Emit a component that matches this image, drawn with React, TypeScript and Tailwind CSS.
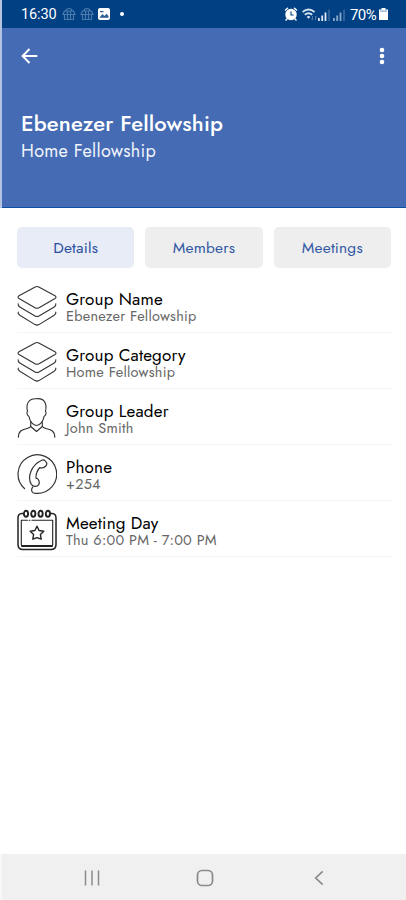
import type { ReactNode } from 'react';

const tabs = [
    { label: 'Details', active: true },
    { label: 'Members', active: false },
    { label: 'Meetings', active: false },
];

function LayersIcon() {
    return (
        <svg viewBox="0 0 40 42" className="h-[42px] w-10" fill="none" stroke="#333" strokeWidth="1.1" strokeLinejoin="round" strokeLinecap="round">
            <path d="M18.2 1.9Q20 1 21.8 1.9L38 10.8Q40 12.2 38 13.5L22 22.8Q20 23.8 18 22.8L2 13.5Q0 12.2 2 10.8Z" />
            <path d="M1.2 18.7Q.8 20.8 2.8 22L18 31Q20 32.1 22 31L37.2 22Q39.2 20.8 38.8 18.7" />
            <path d="M1.2 27Q.8 29.1 2.8 30.3L18 39.6Q20 40.7 22 39.6L37.2 30.3Q39.2 29.1 38.8 27" />
        </svg>
    );
}

function PersonIcon() {
    return (
        <svg viewBox="0 0 40 42" className="h-[42px] w-10" fill="none" stroke="#333" strokeWidth="1.1" strokeLinejoin="round" strokeLinecap="round">
            <path d="M10.6 14.5C8.5 6.5 12 1.5 19 1.8C27 .5 30.5 6.5 28.4 14.5C30 15 28.5 19 27.2 19.2C26 25.5 22.5 28.5 19.5 28.5S13 25.5 11.8 19.2C10.5 19 9 15 10.6 14.5Z" />
            <path d="M13.7 24.8V29.5L19.5 34.5L25.3 29.5V24.8" />
            <path d="M13.7 29.5C11.5 33.2 1.6 29.8 1.4 40.2M25.3 29.5C27.5 33.2 37.6 29.8 37.8 40.2" />
        </svg>
    );
}

function PhoneIcon() {
    return (
        <svg viewBox="0 0 40 42" className="h-[42px] w-10" fill="none" stroke="#333" strokeWidth="1.2" strokeLinejoin="round" strokeLinecap="round">
            <path d="M7.5 35.5A19.3 19.3 0 1 1 18.5 40.3C14.8 40.5 13.5 37 15.7 34.2" />
            <path d="M24.7 7.2C27.2 6 30.5 9.3 29.7 11.5C29.2 13.8 25.2 15.8 22.8 14.5C20 17.8 18.7 21.5 19 25.2C21.5 25.3 23.2 29.2 21.7 31.6C20 34.5 16 33.7 14.3 31.3C10 24.5 14 12 24.7 7.2Z" />
        </svg>
    );
}

function CalendarIcon() {
    return (
        <svg viewBox="0 0 40 42" className="h-[42px] w-10" fill="none" stroke="#222" strokeLinejoin="round" strokeLinecap="round">
            <path strokeWidth="1.5" d="M6 4.5H4.8Q1 4.8 1 9V35.5Q1 40.5 6 40.5H34Q39 40.5 39 35.5V9Q39 4.8 35.2 4.5H34" />
            <path strokeWidth="1.1" d="M10.5 11.2H4.3V35.8Q4.3 37 5.8 37H34.2Q35.7 37 35.7 35.8V11.2H15M12.2 11.2h.8" />
            <path strokeWidth="1.8" d="M5 37H35" />
            <g strokeWidth="1.9">
                <ellipse cx="9" cy="4.8" rx="2.1" ry="3" />
                <ellipse cx="16.3" cy="4.8" rx="2.1" ry="3" />
                <ellipse cx="23.6" cy="4.8" rx="2.1" ry="3" />
                <ellipse cx="30.9" cy="4.8" rx="2.1" ry="3" />
            </g>
            <path strokeWidth="1.4" d="M20 17.2L22.1 21.5L26.8 22.2L23.4 25.5L24.2 30.2L20 28.6L15.8 30.2L16.6 25.5L13.2 22.2L17.9 21.5Z" />
        </svg>
    );
}

const details: { title: string; value: string; icon: ReactNode }[] = [
    { title: 'Group Name', value: 'Ebenezer Fellowship', icon: <LayersIcon /> },
    { title: 'Group Category', value: 'Home Fellowship', icon: <LayersIcon /> },
    { title: 'Group Leader', value: 'John Smith', icon: <PersonIcon /> },
    { title: 'Phone', value: '+254', icon: <PhoneIcon /> },
    { title: 'Meeting Day', value: 'Thu 6:00 PM - 7:00 PM', icon: <CalendarIcon /> },
];

function GiftIcon() {
    return (
        <svg viewBox="0 0 14 14" className="h-3.5 w-3.5" fill="none" stroke="#4a7aac" strokeWidth="1.2">
            <path d="M2.5 4H11.5L13 7.5H1ZM2.5 7.5V12.5H11.5V7.5M5.5 4V12.5M8.5 4V12.5M4 4Q4 1.5 7 1.5T10 4" />
        </svg>
    );
}

function SignalIcon({ dim }: { dim?: boolean }) {
    return (
        <svg viewBox="0 0 13 12" className="h-3 w-[13px]" fill={dim ? '#8aa9ca' : '#dce8f5'}>
            <path d="M0 9h1.8v3H0zM3.3 6.5h1.8V12H3.3zM6.6 3.5h1.8V12H6.6z" />
            <path d="M10.3 .5h1.5V12h-1.5z" fill="#3f6d9e" />
        </svg>
    );
}

function StatusBar() {
    return (
        <div className="flex h-7 items-center bg-[#004083] pl-[19px] pr-[18px] font-['Roboto',sans-serif] text-white">
            <span className="mt-[2px] w-9 text-[14.5px] leading-none tracking-[-0.1px]">16:30</span>
            <div className="ml-[5px] flex items-center gap-[4px]">
                <GiftIcon />
                <GiftIcon />
                <svg viewBox="0 0 12 12" className="h-3 w-3">
                    <rect width="12" height="12" rx="2" fill="#fff" />
                    <path d="M1.5 9.5L4.5 6L6.5 8L8.5 5.8L10.5 8V9.8H1.5ZM2 3H5.5V4.2H2Z" fill="#315f93" />
                </svg>
            </div>
            <span className="ml-[10px] h-1 w-1 rounded-full bg-white" />
            <div className="ml-auto flex items-center">
                <svg viewBox="0 0 14 14" className="h-3.5 w-3.5" fill="none" stroke="#fff" strokeWidth="1.5" strokeLinecap="round">
                    <circle cx="7" cy="7.5" r="5" fill="#fff" />
                    <path d="M1.5 3L3.5 1.3M12.5 3L10.5 1.3M3.2 11.8L2 13M10.8 11.8L12 13" />
                    <path d="M7 4.8V8H9.2" stroke="#004083" strokeWidth="1.1" />
                </svg>
                <svg viewBox="0 0 16 13" className="ml-1 h-[13px] w-4" fill="none" stroke="#d5e2f0" strokeWidth="1.9">
                    <path d="M.6 4Q6.5-1 12.6 4M2.8 6.7Q6.5 3.7 10.2 6.7" />
                    <path d="M4.7 8.7Q6.5 7.4 8.3 8.7L6.5 10.8Z" fill="#e6eef7" stroke="none" />
                    <path d="M10.5 8V12M9 10.5L10.5 12M13.5 12V8M15 9.5L13.5 8" stroke="#4f7aa8" strokeWidth="1" />
                </svg>
                <span className="mt-[2px] flex gap-[2px]">
                    <SignalIcon />
                    <SignalIcon dim />
                </span>
                <span className="ml-[4px] mt-[2px] w-[29px] text-[15px] leading-none tracking-[-0.6px]">70%</span>
                <svg viewBox="0 0 9 12" className="h-3 w-[9px]">
                    <path d="M2.5 0h4v1.5H9V12H0V1.5H2.5Z" fill="#fff" />
                    <path d="M1 2.3H8V4H1Z" fill="#a6bfd8" />
                </svg>
            </div>
        </div>
    );
}

export default function App() {
    return (
        <div className="flex h-[900px] w-[406px] flex-col overflow-hidden bg-white font-['Jost','Lato',sans-serif]">
            <div className="border-l-2 border-[#b3c3e1]">
                <StatusBar />
                <header className="h-[180px] border-b border-b-[#0b50a5] bg-[#446bb3] pl-[19px] text-white">
                    <div className="flex h-[56px] items-center justify-between pr-[21px]">
                        <svg viewBox="0 0 18 18" className="h-[18px] w-[18px]" fill="none" stroke="#fff" strokeWidth="2">
                            <path d="M8.5 2L1.6 9L8.5 16M1.6 9H16.3" />
                        </svg>
                        <svg viewBox="0 0 6 18" className="h-[18px] w-1.5" fill="#fff">
                            <circle cx="3" cy="3" r="2.3" />
                            <circle cx="3" cy="9" r="2.3" />
                            <circle cx="3" cy="15" r="2.3" />
                        </svg>
                    </div>
                    <h1 className="mt-[25px] text-[22px] font-medium leading-[28px] tracking-[0.15px] whitespace-nowrap">Ebenezer Fellowship</h1>
                    <p className="mt-0.5 text-[18px] leading-[24px] tracking-[0.28px] text-[#f0f4fb] whitespace-nowrap">Home Fellowship</p>
                </header>
            </div>

            <nav className="mt-[19px] flex gap-[11px] pl-[17px] pr-[15px]">
                {tabs.map((tab) => (
                    <button
                        key={tab.label}
                        className={`h-[41px] flex-1 rounded-[5px] pt-px text-[15.5px] tracking-[0.2px] ${tab.active ? 'bg-[#e8ecf6] text-[#284f9f]' : 'bg-[#eeeeee] text-[#3258a4]'}`}
                    >
                        {tab.label}
                    </button>
                ))}
            </nav>

            <main className="mt-[9px] flex-1 pl-[17px] pr-[13px]">
                {details.map((item) => (
                    <div key={item.title} className="flex h-14 items-center border-b border-[#f5f5f5] pt-[3px]">
                        {item.icon}
                        <div className="ml-[9px] mt-px whitespace-nowrap">
                            <div className="text-[17px] leading-[18px] tracking-[0.17px] text-black">{item.title}</div>
                            <div className="text-[14.5px] leading-[16px] tracking-[0.25px] text-[#666]">{item.value}</div>
                        </div>
                    </div>
                ))}
            </main>

            <footer className="flex h-[46px] items-center border-l-2 border-[#f7f7f7] bg-[#f0f0f0] pl-[82px] pt-[2px]">
                <svg viewBox="0 0 16 16" className="h-4 w-4" stroke="#8a8a8a" strokeWidth="1.5">
                    <path d="M1.5 .5V15.5M8 .5V15.5M14.5 .5V15.5" />
                </svg>
                <svg viewBox="0 0 18 18" className="ml-[96px] h-[18px] w-[18px]" fill="none" stroke="#8a8a8a" strokeWidth="1.7">
                    <rect x="1.5" y="1.5" width="15" height="15" rx="4.5" />
                </svg>
                <svg viewBox="0 0 10 16" className="ml-[100px] h-4 w-2.5" fill="none" stroke="#8a8a8a" strokeWidth="1.7">
                    <path d="M8.7 1.3L1.7 8L8.7 14.7" />
                </svg>
            </footer>
        </div>
    );
}
